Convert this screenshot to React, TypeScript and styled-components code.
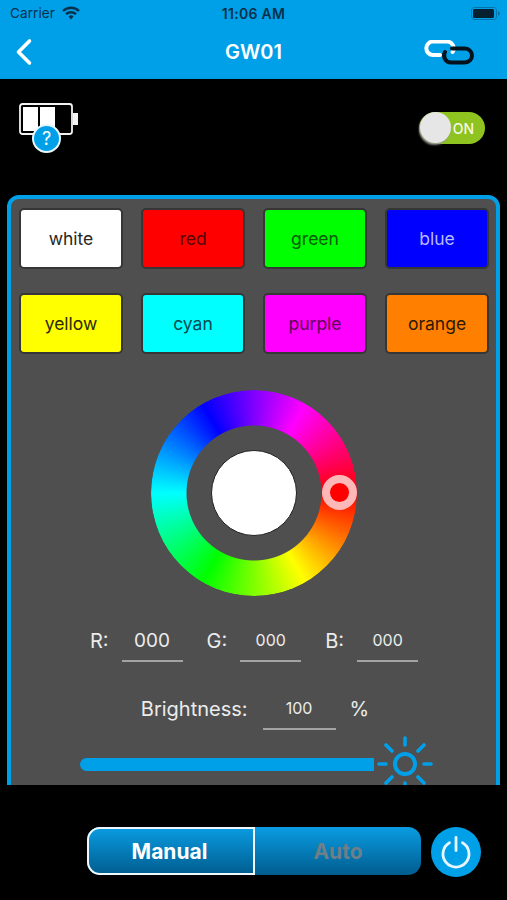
import React from "react";
import styled, { createGlobalStyle } from "styled-components";

const GlobalStyle = createGlobalStyle`
  html, body {
    margin: 0;
    padding: 0;
    background: #000;
  }
  * {
    box-sizing: border-box;
  }
`;

const Page = styled.div`
  width: 507px;
  height: 900px;
  overflow: hidden;
  background: #000;
  font-family: Inter, "Liberation Sans", sans-serif;
  display: flex;
  flex-direction: column;
`;

const Header = styled.header`
  height: 79px;
  flex: none;
  background: #00a0e9;
  padding: 0 7px 0 10px;
`;

const StatusBar = styled.div`
  height: 28px;
  padding-bottom: 2px;
  display: grid;
  grid-template-columns: 1fr auto 1fr;
  align-items: center;
  color: #06314c;
  font-size: 13.5px;
`;

const Carrier = styled.div`
  display: flex;
  align-items: center;
  gap: 7px;
  letter-spacing: 0.1px;
`;

const Clock = styled.div`
  font-weight: 600;
  font-size: 14px;
  letter-spacing: 0.3px;
  margin-left: -3px;
`;

const StatusBattery = styled.svg`
  justify-self: end;
`;

const NavBar = styled.div`
  display: grid;
  grid-template-columns: 1fr auto 1fr;
  align-items: center;
  height: 48px;
  color: #fff;
`;

const BackIcon = styled.svg`
  margin-left: 5px;
  display: block;
`;

const Title = styled.div`
  font-size: 20px;
  font-weight: 600;
  margin-left: -3px;
`;

const LinkIcon = styled.svg`
  justify-self: end;
  margin-right: 26px;
  display: block;
`;

const TopRow = styled.div`
  height: 116px;
  flex: none;
  display: flex;
  justify-content: space-between;
  padding: 24px 22px 0 19px;
`;

const BatteryWrap = styled.div`
  position: relative;
  width: 60px;
  height: 33px;
`;

const HelpBadge = styled.div`
  position: absolute;
  left: 13px;
  top: 21px;
  width: 29px;
  height: 29px;
  border-radius: 50%;
  background: #00a0e9;
  border: 2px solid #e8f6fd;
  color: #fff;
  font-size: 18px;
  font-weight: 400;
  display: flex;
  align-items: center;
  justify-content: center;
`;

const Switch = styled.div`
  position: relative;
  width: 66px;
  height: 32px;
  margin-top: 9px;
  border-radius: 16px;
  background: #8fc31f;
  color: #f4f8e6;
  font-size: 14px;
  font-weight: 500;
  display: flex;
  align-items: center;
  justify-content: flex-end;
  padding-right: 11px;
`;

const SwitchThumb = styled.div`
  position: absolute;
  left: 1px;
  top: 0;
  width: 31px;
  height: 31px;
  border-radius: 50%;
  background: #e6e6e6;
  box-shadow: -1px 2px 2px rgba(150, 150, 150, 0.9);
`;

const PanelClip = styled.div`
  height: 590px;
  flex: none;
  overflow: hidden;
  padding: 0 7px;
`;

const Panel = styled.section`
  height: 640px;
  background: #4f4f4f;
  border: 4px solid #00a0e9;
  border-radius: 12px;
  padding: 9px 7px 9px 8px;
`;

const Swatches = styled.div`
  display: grid;
  grid-template-columns: repeat(4, 104px);
  grid-auto-rows: 61px;
  column-gap: 18px;
  row-gap: 24px;
`;

const Swatch = styled.button<{ $bg: string; $fg: string }>`
  background: ${(p) => p.$bg};
  color: ${(p) => p.$fg};
  border: 2px solid #363636;
  border-radius: 5px;
  padding: 0;
  font-family: inherit;
  font-size: 17.5px;
  display: flex;
  align-items: center;
  justify-content: center;
`;

const WheelBox = styled.div`
  position: relative;
  width: 206px;
  height: 206px;
  margin: 36px auto 0;
`;

const WheelRing = styled.div`
  width: 100%;
  height: 100%;
  border-radius: 50%;
  background: conic-gradient(from 90deg, #f00, #ff0, #0f0, #0ff, #00f, #f0f, #f00);
  -webkit-mask: radial-gradient(circle closest-side, transparent 67px, #000 68px);
  mask: radial-gradient(circle closest-side, transparent 67px, #000 68px);
`;

const WheelCenter = styled.div`
  position: absolute;
  left: 60px;
  top: 60px;
  width: 86px;
  height: 86px;
  border-radius: 50%;
  background: #fff;
  border: 1.5px solid #222;
`;

const WheelThumb = styled.div`
  position: absolute;
  left: 171px;
  top: 85px;
  width: 35px;
  height: 35px;
  border-radius: 50%;
  background: #f00;
  border: 8px solid #ffb8b8;
`;

const ValueRow = styled.div<{ $top: number; $gap: number; $offset?: number }>`
  display: flex;
  justify-content: center;
  margin-top: ${(p) => p.$top}px;
  margin-left: ${(p) => p.$offset ?? 0}px;
  gap: ${(p) => p.$gap}px;
  color: #ececec;
  font-size: 20px;
`;

const Group = styled.div<{ $gap: number }>`
  display: flex;
  gap: ${(p) => p.$gap}px;
`;

const Label = styled.span`
  height: 36px;
  line-height: 31px;
`;

const Field = styled.div<{ $width: number; $size: number }>`
  width: ${(p) => p.$width}px;
  height: 36px;
  border-bottom: 2px solid #a3a3a3;
  font-size: ${(p) => p.$size}px;
  display: flex;
  align-items: center;
  justify-content: center;
  padding-bottom: 6px;
`;

const SliderRow = styled.div`
  display: flex;
  align-items: center;
  margin: 6px 0 0 61px;
`;

const SliderTrack = styled.div`
  width: 294px;
  height: 13px;
  background: #00a0e9;
  border-radius: 6.5px 0 0 6.5px;
`;

const SunIcon = styled.svg`
  display: block;
  flex: none;
  margin-left: 1px;
`;

const BottomBar = styled.div`
  display: flex;
  gap: 10px;
  padding: 42px 0 0 87px;
`;

const Segmented = styled.div`
  width: 334px;
  height: 48px;
  display: flex;
  border-radius: 13px;
  background: linear-gradient(#0a9ce2, #005c8e);
`;

const Segment = styled.div<{ $active?: boolean }>`
  flex: none;
  width: ${(p) => (p.$active ? "168px" : "166px")};
  display: flex;
  align-items: center;
  justify-content: center;
  padding-right: ${(p) => (p.$active ? "3px" : "0")};
  font-size: 21px;
  font-weight: 700;
  color: ${(p) => (p.$active ? "#fff" : "#6f7f88")};
  border: ${(p) => (p.$active ? "2px solid #eef8fd" : "none")};
  border-radius: ${(p) => (p.$active ? "13px 0 0 13px" : "0")};
`;

const PowerButton = styled.button`
  width: 50px;
  height: 50px;
  padding: 0;
  border: none;
  border-radius: 50%;
  background: #00a0e9;
  display: flex;
  align-items: center;
  justify-content: center;
`;

const colors = [
  { name: "white", bg: "#ffffff", fg: "#262626" },
  { name: "red", bg: "#ff0000", fg: "#560404" },
  { name: "green", bg: "#00ff00", fg: "#045c04" },
  { name: "blue", bg: "#0000ff", fg: "#b8b8ff" },
  { name: "yellow", bg: "#ffff00", fg: "#2a2a04" },
  { name: "cyan", bg: "#00ffff", fg: "#044a52" },
  { name: "purple", bg: "#ff00ff", fg: "#5a065a" },
  { name: "orange", bg: "#ff8000", fg: "#2e1a04" },
];

function WifiGlyph() {
  return (
    <svg width="18" height="14" viewBox="0 0 18 14" fill="none" stroke="#06314c" strokeWidth="2.4">
      <path d="M1 5a11.5 11.5 0 0 1 16 0" />
      <path d="M4 8.2a7.2 7.2 0 0 1 10 0" />
      <path d="M9 13.5l-2.5-3a3.6 3.6 0 0 1 5 0z" fill="#06314c" stroke="none" />
    </svg>
  );
}

export default function App() {
  return (
    <Page>
      <GlobalStyle />
      <Header>
        <StatusBar>
          <Carrier>
            Carrier
            <WifiGlyph />
          </Carrier>
          <Clock>11:06 AM</Clock>
          <StatusBattery width="29" height="13" viewBox="0 0 29 13">
            <rect x="0.5" y="0.5" width="25" height="12" rx="3" fill="none" stroke="#06314c" strokeOpacity="0.4" />
            <rect x="2" y="2" width="21" height="9" rx="1.5" fill="#06202f" />
            <path d="M27 4.5a2 2 0 0 1 0 4z" fill="#06314c" fillOpacity="0.4" />
          </StatusBattery>
        </StatusBar>
        <NavBar>
          <BackIcon width="18" height="28" viewBox="0 0 18 28" fill="none" stroke="#fff" strokeWidth="3.6" strokeLinecap="round" strokeLinejoin="round">
            <path d="M14.5 3 3.5 14l11 11" />
          </BackIcon>
          <Title>GW01</Title>
          <LinkIcon width="50" height="25" viewBox="0 0 50 25" fill="none" strokeWidth="4" strokeLinecap="round">
            <path d="M16 15H9a6.7 6.7 0 0 1 0-13.4h14a6.7 6.7 0 0 1 5.6 10.4" stroke="#fff" />
            <path d="M28 8.5h13a7 7 0 0 1 0 14H27a7 7 0 0 1-6-10.5" stroke="#03121c" />
          </LinkIcon>
        </NavBar>
      </Header>

      <TopRow>
        <BatteryWrap>
          <svg width="60" height="33" viewBox="0 0 60 33">
            <rect x="1" y="1" width="52" height="30" rx="2.5" fill="none" stroke="#f2f2f2" strokeWidth="1.8" />
            <rect x="4" y="4" width="15" height="24" fill="#fff" />
            <rect x="21" y="4" width="15" height="24" fill="#fff" />
            <rect x="54" y="10" width="5" height="12" fill="#f2f2f2" />
          </svg>
          <HelpBadge>?</HelpBadge>
        </BatteryWrap>
        <Switch>
          ON
          <SwitchThumb />
        </Switch>
      </TopRow>

      <PanelClip>
        <Panel>
          <Swatches>
            {colors.map((c) => (
              <Swatch key={c.name} $bg={c.bg} $fg={c.fg}>
                {c.name}
              </Swatch>
            ))}
          </Swatches>

          <WheelBox>
            <WheelRing />
            <WheelCenter />
            <WheelThumb />
          </WheelBox>

          <ValueRow $top={30} $gap={24}>
            <Group $gap={13}>
              <Label>R:</Label>
              <Field $width={61} $size={19}>000</Field>
            </Group>
            <Group $gap={13}>
              <Label>G:</Label>
              <Field $width={61} $size={16}>000</Field>
            </Group>
            <Group $gap={13}>
              <Label>B:</Label>
              <Field $width={61} $size={16}>000</Field>
            </Group>
          </ValueRow>

          <ValueRow $top={32} $gap={14} $offset={2}>
            <Group $gap={15}>
              <Label>Brightness:</Label>
              <Field $width={73} $size={16}>100</Field>
            </Group>
            <Label>%</Label>
          </ValueRow>

          <SliderRow>
            <SliderTrack />
            <SunIcon width="58" height="56" viewBox="0 0 58 56" fill="none" stroke="#00a0e9" strokeWidth="3.6" strokeLinecap="round">
              <circle cx="30" cy="28" r="10" strokeWidth="4" />
              <path d="M30 2v7M30 47v7M4 28h7M49 28h7M11 9l6 6M49 9l-6 6M11 47l6-6M49 47l-6-6" />
            </SunIcon>
          </SliderRow>
        </Panel>
      </PanelClip>

      <BottomBar>
        <Segmented>
          <Segment $active>Manual</Segment>
          <Segment>Auto</Segment>
        </Segmented>
        <PowerButton>
          <svg width="32" height="34" viewBox="0 0 32 34" fill="none" stroke="#e8f6fd" strokeWidth="2.8" strokeLinecap="round">
            <path d="M16 2.5v13" />
            <path d="M9.5 7.8a13 13 0 1 0 13 0" />
          </svg>
        </PowerButton>
      </BottomBar>
    </Page>
  );
}
